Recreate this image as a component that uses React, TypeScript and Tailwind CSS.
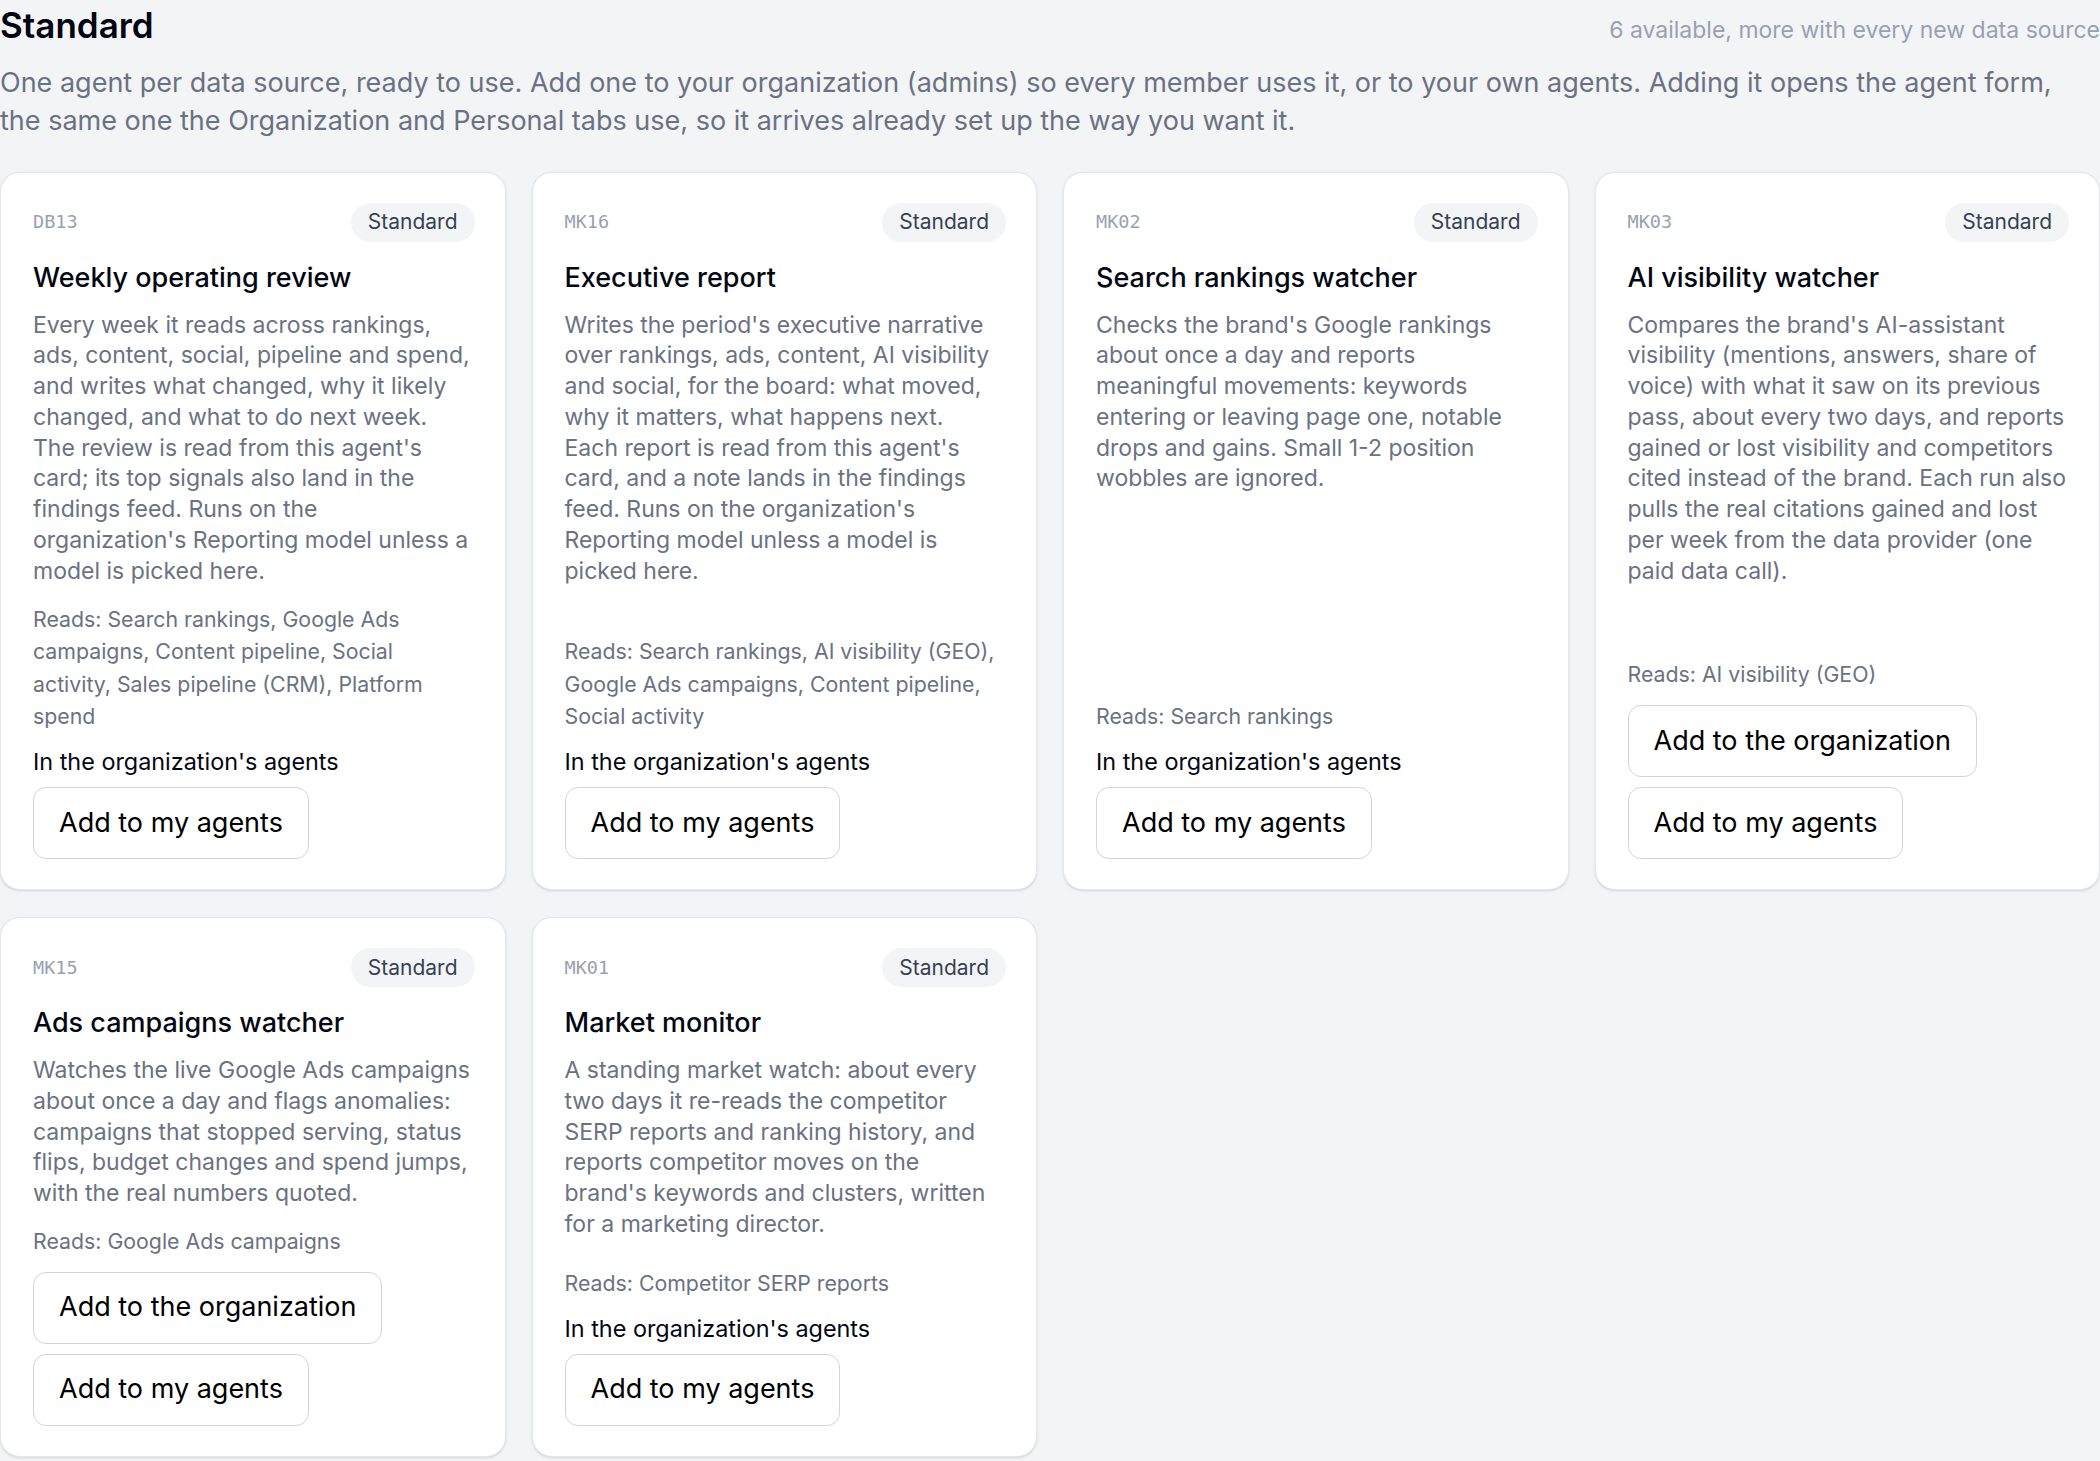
type Agent = {
  id: string;
  title: string;
  description: string;
  reads: string;
  inOrg: boolean;
};

const agents: Agent[] = [
  {
    id: "DB13",
    title: "Weekly operating review",
    description:
      "Every week it reads across rankings, ads, content, social, pipeline and spend, and writes what changed, why it likely changed, and what to do next week. The review is read from this agent's card; its top signals also land in the findings feed. Runs on the organization's Reporting model unless a model is picked here.",
    reads:
      "Search rankings, Google Ads campaigns, Content pipeline, Social activity, Sales pipeline (CRM), Platform spend",
    inOrg: true,
  },
  {
    id: "MK16",
    title: "Executive report",
    // the reference breaks before "Each", our Inter metrics run a hair narrower
    description:
      "Writes the period's executive narrative over rankings, ads, content, AI visibility and social, for the board: what moved, why it matters, what happens next.\nEach report is read from this agent's card, and a note lands in the findings feed. Runs on the organization's Reporting model unless a model is picked here.",
    reads: "Search rankings, AI visibility (GEO), Google Ads campaigns, Content pipeline, Social activity",
    inOrg: true,
  },
  {
    id: "MK02",
    title: "Search rankings watcher",
    description:
      "Checks the brand's Google rankings about once a day and reports meaningful movements: keywords entering or leaving page one, notable drops and gains. Small 1-2 position wobbles are ignored.",
    reads: "Search rankings",
    inOrg: true,
  },
  {
    id: "MK03",
    title: "AI visibility watcher",
    description:
      "Compares the brand's AI-assistant visibility (mentions, answers, share of voice) with what it saw on its previous pass, about every two days, and reports gained or lost visibility and competitors cited instead of the brand. Each run also pulls the real citations gained and lost per week from the data provider (one paid data call).",
    reads: "AI visibility (GEO)",
    inOrg: false,
  },
  {
    id: "MK15",
    title: "Ads campaigns watcher",
    description:
      "Watches the live Google Ads campaigns about once a day and flags anomalies: campaigns that stopped serving, status flips, budget changes and spend jumps, with the real numbers quoted.",
    reads: "Google Ads campaigns",
    inOrg: false,
  },
  {
    id: "MK01",
    title: "Market monitor",
    description:
      "A standing market watch: about every two days it re-reads the competitor SERP reports and ranking history, and reports competitor moves on the brand's keywords and clusters, written for a marketing director.",
    reads: "Competitor SERP reports",
    inOrg: true,
  },
];

function ActionButton({ label }: { label: string }) {
  return (
    <button className="h-[72px] px-[25px] rounded-[13px] border border-gray-300 bg-white text-[27px] text-black">
      {label}
    </button>
  );
}

function AgentCard({ agent }: { agent: Agent }) {
  return (
    <div className="flex flex-col bg-white border border-gray-200 rounded-[20px] shadow-sm pl-[32px] pr-[30px] pt-[30px] pb-[30px]">
      <div className="flex items-center justify-between">
        <span className="font-['DejaVu_Sans_Mono',monospace] text-[18.5px] text-gray-400">{agent.id}</span>
        <span className="h-[39px] px-[17px] flex items-center rounded-full bg-gray-100 text-gray-700 text-[21px]">
          Standard
        </span>
      </div>
      <h3 className="mt-[18px] text-[27px] leading-[36px] font-medium text-gray-950">{agent.title}</h3>
      <p className="mt-3.5 mb-4 whitespace-pre-line text-[23px] leading-[30.8px] text-gray-500">
        {agent.description}
      </p>
      <p className="mt-auto text-[21.3px] leading-[32.6px] text-gray-500">Reads: {agent.reads}</p>
      <div className="mt-[14px] flex flex-col items-start gap-[10px]">
        {agent.inOrg ? (
          <span className="text-[23.4px] leading-[30px] text-gray-950">In the organization's agents</span>
        ) : (
          <ActionButton label="Add to the organization" />
        )}
        <ActionButton label="Add to my agents" />
      </div>
    </div>
  );
}

export default function App() {
  return (
    <div className="min-h-screen bg-[#f3f4f6] font-['Inter',sans-serif]">
      <div className="flex items-baseline justify-between pt-[3px]">
        <h2 className="text-[35px] leading-[44px] font-semibold text-gray-950">Standard</h2>
        <span className="text-[23px] text-gray-400">6 available, more with every new data source</span>
      </div>
      <p className="mt-4 max-w-[2070px] text-[27px] leading-[38.5px] text-gray-500">
        One agent per data source, ready to use. Add one to your organization (admins) so every member uses it, or to
        your own agents. Adding it opens the agent form, the same one the Organization and Personal tabs use, so it
        arrives already set up the way you want it.
      </p>
      <div className="mt-[31px] grid grid-cols-4 gap-x-[26px] gap-y-[27px]">
        {agents.map((a) => (
          <AgentCard key={a.id} agent={a} />
        ))}
      </div>
    </div>
  );
}
